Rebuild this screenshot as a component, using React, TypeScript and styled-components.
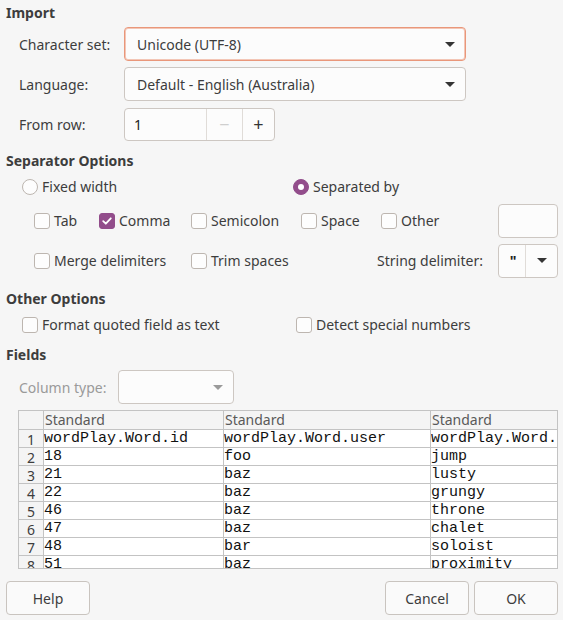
import React from "react";
import styled, { createGlobalStyle, css } from "styled-components";

const Global = createGlobalStyle`
  html, body { margin: 0; padding: 0; background: #f6f6f6; }
  * { box-sizing: border-box; }
`;

const Page = styled.div`
  width: 563px;
  height: 620px;
  padding: 4px 5px 5px 6px;
  display: flex;
  flex-direction: column;
  background: #f6f6f6;
  color: #3d3d3d;
  font-family: "Noto Sans", "Open Sans", sans-serif;
  font-size: 14px;
  overflow: hidden;
`;

const Heading = styled.div<{ $top?: number }>`
  font-weight: 700;
  height: 18px;
  line-height: 18px;
  margin-top: ${(p) => p.$top ?? 0}px;
`;

const FormGrid = styled.div`
  display: grid;
  grid-template-columns: 105px 342px;
  grid-auto-rows: 34px;
  row-gap: 6px;
  margin-top: 5px;
  padding-left: 13px;
  align-items: center;
`;

const Label = styled.span<{ $disabled?: boolean }>`
  color: ${(p) => (p.$disabled ? "#9a9a9a" : "#3d3d3d")};
  white-space: nowrap;
`;

const Combo = styled.div<{ $focused?: boolean; $disabled?: boolean; $width?: number }>`
  height: 34px;
  width: ${(p) => (p.$width ? `${p.$width}px` : "100%")};
  display: flex;
  align-items: center;
  justify-content: space-between;
  padding: 0 10px 0 12px;
  background: #fcfcfc;
  border: 1px solid #cdc7c2;
  border-radius: 4px;
  ${(p) =>
    p.$focused &&
    css`
      border-color: #e9977a;
      box-shadow: inset 0 0 0 1px #f3c6b6;
    `}
`;

const Arrow = styled.span<{ $disabled?: boolean }>`
  width: 0;
  height: 0;
  border-left: 5px solid transparent;
  border-right: 5px solid transparent;
  border-top: 5px solid ${(p) => (p.$disabled ? "#9a9a9a" : "#353535")};
`;

const Spin = styled.div`
  width: 151px;
  height: 33px;
  display: grid;
  grid-template-columns: 81px 36px 1fr;
  background: #fcfcfc;
  border: 1px solid #cdc7c2;
  border-radius: 4px;
  overflow: hidden;
`;

const SpinValue = styled.div`
  display: flex;
  align-items: center;
  padding-left: 9px;
  color: #222;
`;

const SpinButton = styled.div<{ $disabled?: boolean }>`
  display: flex;
  align-items: center;
  justify-content: center;
  border-left: 1px solid #e0dcd8;
  color: ${(p) => (p.$disabled ? "#cfcfcf" : "#353535")};
  font-size: 18px;
`;

const RadioRow = styled.div`
  display: grid;
  grid-template-columns: 271px auto;
  height: 20px;
  margin-top: 7px;
  padding-left: 16px;
  align-items: center;
`;

const CheckRow = styled.div<{ $cols: string; $top: number; $left: number; $h?: number }>`
  display: grid;
  grid-template-columns: ${(p) => p.$cols};
  height: ${(p) => p.$h ?? 34}px;
  margin-top: ${(p) => p.$top}px;
  padding-left: ${(p) => p.$left}px;
  align-items: center;
`;

const Option = styled.label`
  display: flex;
  align-items: center;
  gap: 4px;
  white-space: nowrap;
`;

const Box = styled.span<{ $checked?: boolean }>`
  width: 16px;
  height: 16px;
  border-radius: 3px;
  flex: none;
  display: flex;
  align-items: center;
  justify-content: center;
  background: ${(p) => (p.$checked ? "#924d8b" : "#fdfdfd")};
  border: 1px solid ${(p) => (p.$checked ? "#924d8b" : "#bdb6b0")};
`;

const RadioDot = styled.span<{ $checked?: boolean }>`
  width: 16px;
  height: 16px;
  border-radius: 50%;
  flex: none;
  display: flex;
  align-items: center;
  justify-content: center;
  background: ${(p) => (p.$checked ? "#924d8b" : "#fdfdfd")};
  border: 1px solid ${(p) => (p.$checked ? "#924d8b" : "#bdb6b0")};
  &::after {
    content: "";
    display: ${(p) => (p.$checked ? "block" : "none")};
    width: 6px;
    height: 6px;
    border-radius: 50%;
    background: #fff;
  }
`;

const Entry = styled.div`
  width: 60px;
  height: 34px;
  background: #fcfcfc;
  border: 1px solid #cdc7c2;
  border-radius: 4px;
`;

const DelimCombo = styled.div`
  width: 60px;
  height: 34px;
  display: grid;
  grid-template-columns: 26px 1fr;
  background: #fcfcfc;
  border: 1px solid #cdc7c2;
  border-radius: 4px;
`;

const DelimValue = styled.div`
  display: flex;
  align-items: center;
  justify-content: center;
  color: #222;
  font-weight: 700;
  padding-left: 2px;
`;

const DelimButton = styled.div`
  display: flex;
  align-items: center;
  justify-content: center;
  border-left: 1px solid #e0dcd8;
`;

const ColumnTypeRow = styled.div`
  display: grid;
  grid-template-columns: 99px 116px;
  height: 34px;
  margin-top: 6px;
  padding-left: 13px;
  align-items: center;
`;

const Table = styled.div`
  margin-top: 6px;
  margin-left: 12px;
  width: 540px;
  height: 161px;
  border: 1px solid #c3c3c3;
  background: #fff;
  overflow: hidden;
  display: grid;
  grid-template-columns: 25px 180px 207px 127px;
  grid-template-rows: 19px;
  grid-auto-rows: 18px;
`;

const HeadCell = styled.div`
  background: #f4f4f4;
  border-right: 1px solid #c3c3c3;
  border-bottom: 1px solid #c3c3c3;
  color: #5a5a5a;
  font-size: 14px;
  line-height: 18px;
  padding-left: 1px;
  white-space: nowrap;
  overflow: hidden;
`;

const RowNum = styled.div`
  background: #f4f4f4;
  border-right: 1px solid #c3c3c3;
  border-bottom: 1px solid #c3c3c3;
  color: #3d3d3d;
  font-size: 14px;
  line-height: 15px;
  padding-top: 2px;
  text-align: center;
  overflow: hidden;
`;

const Cell = styled.div`
  border-right: 1px solid #c3c3c3;
  border-bottom: 1px solid #c3c3c3;
  font-family: "Liberation Mono", "DejaVu Sans Mono", monospace;
  font-size: 15px;
  line-height: 17px;
  color: #111;
  white-space: nowrap;
  overflow: hidden;
`;

const ButtonBar = styled.div`
  margin-top: 12px;
  display: flex;
  align-items: center;
  gap: 5px;
  height: 34px;
`;

const Spacer = styled.div`
  flex: 1;
`;

const Button = styled.div`
  width: 84px;
  height: 34px;
  display: flex;
  align-items: center;
  justify-content: center;
  background: #fafafa;
  border: 1px solid #c9c4bf;
  border-radius: 4px;
  color: #3d3d3d;
`;

const Check = () => (
  <svg width="12" height="12" viewBox="0 0 12 12">
    <path d="M2.2 6.2 L4.8 8.7 L9.8 3.3" fill="none" stroke="#fff" strokeWidth="1.8" strokeLinecap="round" strokeLinejoin="round" />
  </svg>
);

const CheckOption = ({ label, checked }: { label: string; checked?: boolean }) => (
  <Option>
    <Box $checked={checked}>{checked && <Check />}</Box>
    {label}
  </Option>
);

const rows = [
  ["1", "wordPlay.Word.id", "wordPlay.Word.user", "wordPlay.Word."],
  ["2", "18", "foo", "jump"],
  ["3", "21", "baz", "lusty"],
  ["4", "22", "baz", "grungy"],
  ["5", "46", "baz", "throne"],
  ["6", "47", "baz", "chalet"],
  ["7", "48", "bar", "soloist"],
  ["8", "51", "baz", "proximity"],
];

export default function App() {
  return (
    <>
      <Global />
      <Page>
        <Heading>Import</Heading>
        <FormGrid>
          <Label>Character set:</Label>
          <Combo $focused>
            <span>Unicode (UTF-8)</span>
            <Arrow />
          </Combo>
          <Label>Language:</Label>
          <Combo>
            <span>Default - English (Australia)</span>
            <Arrow />
          </Combo>
          <Label>From row:</Label>
          <Spin>
            <SpinValue>1</SpinValue>
            <SpinButton $disabled>−</SpinButton>
            <SpinButton>+</SpinButton>
          </Spin>
        </FormGrid>

        <Heading $top={11}>Separator Options</Heading>
        <RadioRow>
          <Option>
            <RadioDot />
            Fixed width
          </Option>
          <Option>
            <RadioDot $checked />
            Separated by
          </Option>
        </RadioRow>
        <CheckRow $cols="65px 92px 110px 80px 117px 60px" $top={7} $left={28}>
          <CheckOption label="Tab" />
          <CheckOption label="Comma" checked />
          <CheckOption label="Semicolon" />
          <CheckOption label="Space" />
          <CheckOption label="Other" />
          <Entry />
        </CheckRow>
        <CheckRow $cols="157px 186px 121px 60px" $top={6} $left={28}>
          <CheckOption label="Merge delimiters" />
          <CheckOption label="Trim spaces" />
          <Label>String delimiter:</Label>
          <DelimCombo>
            <DelimValue>"</DelimValue>
            <DelimButton>
              <Arrow />
            </DelimButton>
          </DelimCombo>
        </CheckRow>

        <Heading $top={12}>Other Options</Heading>
        <CheckRow $cols="274px auto" $top={7} $left={16} $h={20}>
          <CheckOption label="Format quoted field as text" />
          <CheckOption label="Detect special numbers" />
        </CheckRow>

        <Heading $top={12}>Fields</Heading>
        <ColumnTypeRow>
          <Label $disabled>Column type:</Label>
          <Combo $disabled $width={116}>
            <span />
            <Arrow $disabled />
          </Combo>
        </ColumnTypeRow>

        <Table>
          <HeadCell />
          <HeadCell>Standard</HeadCell>
          <HeadCell>Standard</HeadCell>
          <HeadCell>Standard</HeadCell>
          {rows.map((r) => (
            <React.Fragment key={r[0]}>
              <RowNum>{r[0]}</RowNum>
              <Cell>{r[1]}</Cell>
              <Cell>{r[2]}</Cell>
              <Cell>{r[3]}</Cell>
            </React.Fragment>
          ))}
        </Table>

        <ButtonBar>
          <Button>Help</Button>
          <Spacer />
          <Button>Cancel</Button>
          <Button>OK</Button>
        </ButtonBar>
      </Page>
    </>
  );
}
